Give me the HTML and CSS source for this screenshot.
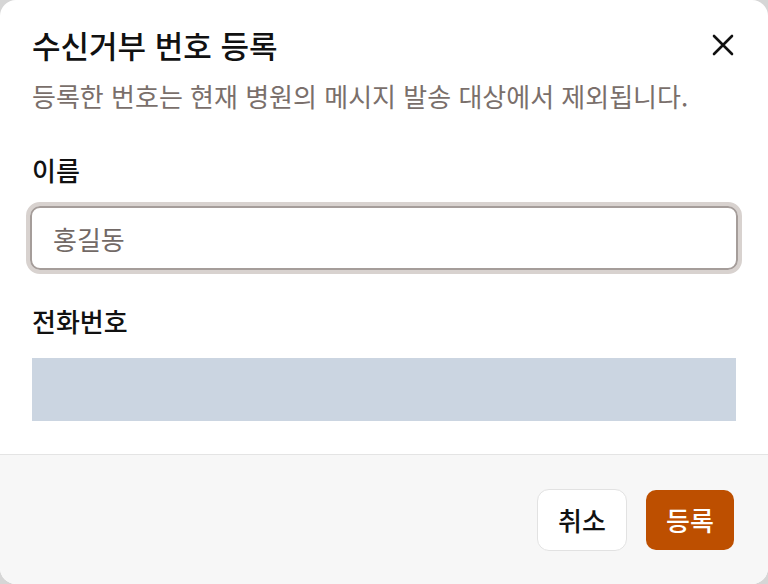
FILE: index.html
```html
<!DOCTYPE html>
<html lang="ko">
<head>
<meta charset="utf-8">
<title>수신거부 번호 등록</title>
<link rel="stylesheet" href="styles.css">
</head>
<body>
<div class="dialog">
  <div class="body">
    <div class="head">
      <h1 class="title">수신거부 번호 등록</h1>
      <button class="close" aria-label="닫기">
        <svg width="22" height="22" viewBox="0 0 22 22"><path d="M2 2 L20 20 M20 2 L2 20" stroke="#111" stroke-width="2.6" stroke-linecap="round" fill="none"/></svg>
      </button>
    </div>
    <p class="desc">등록한 번호는 현재 병원의 메시지 발송 대상에서 제외됩니다.</p>
    <label class="label">이름</label>
    <div class="ring"><input class="input" placeholder="홍길동"></div>
    <label class="label phone-label">전화번호</label>
    <div class="phone"></div>
  </div>
  <div class="footer">
    <button class="btn cancel">취소</button>
    <button class="btn submit">등록</button>
  </div>
</div>
</body>
</html>
```
FILE: styles.css
```css
html, body {
  margin: 0;
  padding: 0;
  background: #d6d6d6;
}
body {
  font-family: "Noto Sans CJK KR", "Noto Sans", sans-serif;
}
.dialog {
  width: 768px;
  height: 584px;
  background: #fff;
  border-radius: 16px;
  overflow: hidden;
  display: flex;
  flex-direction: column;
}
.body {
  flex: 1;
  padding: 26px 32px 0 32px;
  display: flex;
  flex-direction: column;
}
.head {
  display: flex;
  align-items: center;
  justify-content: space-between;
}
.title {
  margin: 0;
  font-size: 31px;
  line-height: 38px;
  font-weight: 500;
  color: #111;
}
.close {
  border: 0;
  background: none;
  padding: 0;
  margin-right: 2px;
  width: 22px;
  height: 22px;
  display: flex;
}
.desc {
  margin: 16px 0 0 0;
  font-size: 26px;
  line-height: 32px;
  color: #7a6f6b;
}
.label {
  margin-top: 42px;
  font-size: 26px;
  line-height: 32px;
  font-weight: 500;
  color: #111;
}
.ring {
  margin: 16px -6px 0 -6px;
  border: 4px solid #d8d2cf;
  border-radius: 14px;
}
.input {
  display: block;
  box-sizing: border-box;
  width: 100%;
  height: 64px;
  border: 2px solid #a59d9a;
  border-radius: 10px;
  padding: 0 21px;
  font-family: inherit;
  font-size: 26px;
  color: #111;
  outline: none;
}
.input::placeholder {
  color: #726966;
}
.phone-label {
  margin-top: 31px;
}
.phone {
  margin-top: 21px;
  height: 63px;
  background: #cbd5e1;
}
.footer {
  height: 129px;
  border-top: 1px solid #e4e4e4;
  background: #f7f7f7;
  display: flex;
  align-items: center;
  justify-content: flex-end;
  gap: 19px;
  padding: 0 34px;
}
.btn {
  font-family: inherit;
  font-size: 26px;
  font-weight: 500;
  border-radius: 12px;
  height: 62px;
  padding: 0;
}
.cancel {
  background: #fff;
  border: 1.5px solid #e2e2e2;
  color: #111;
  width: 90px;
}
.submit {
  background: #bd4f00;
  border: 0;
  color: #fff;
  width: 88px;
  height: 60px;
  border-radius: 10px;
}
```
